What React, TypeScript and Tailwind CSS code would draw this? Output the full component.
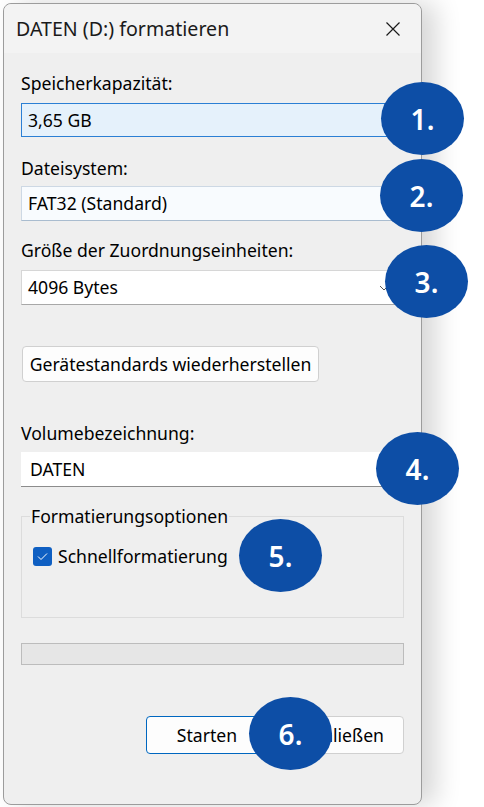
import React from "react";

const font = { fontFamily: "'Noto Sans', 'Open Sans', sans-serif" };

function Marker({ n, className }: { n: number; className: string }) {
  return (
    <div
      className={`absolute z-10 flex h-[73px] w-[83px] items-center justify-center rounded-[50%] bg-[#0d4ea6] text-[28px] font-semibold leading-none text-white ${className}`}
    >
      {n}.
    </div>
  );
}

function Label({ children, className = "" }: { children: React.ReactNode; className?: string }) {
  return <div className={`h-5 text-[17.6px] leading-5 text-black ${className}`}>{children}</div>;
}

export default function App() {
  return (
    <div className="h-[807px] w-[484px] overflow-hidden bg-white pl-[3px] pt-[3px]" style={font}>
      <div className="relative flex h-[802px] w-[419px] flex-col rounded-[8px] border border-[#9c9c9c] bg-[#efefef] shadow-[14px_0_26px_rgba(0,0,0,0.16)]">
        {/* title bar */}
        <div className="flex h-[49px] shrink-0 items-center justify-between rounded-t-[8px] bg-[#f3f3f3] pl-[12px] pr-[20px]">
          <span className="text-[19.6px] leading-6 text-[#1a1a1a]">DATEN (D:) formatieren</span>
          <svg width="16" height="16" viewBox="0 0 16 16" className="mt-[1px]">
            <path d="M1.5 1.5 L14.5 14.5 M14.5 1.5 L1.5 14.5" stroke="#1a1a1a" strokeWidth="1.2" fill="none" />
          </svg>
        </div>

        <div className="flex flex-col px-[17px]">
          <Label className="mt-[20px]">Speicherkapazität:</Label>
          <div className="mt-[10px] flex h-[34px] items-center border border-[#2b7fd4] bg-[#e5f1fb] pl-[6px] text-[17.6px] text-black">
            3,65 GB
          </div>

          <Label className="mt-[21px]">Dateisystem:</Label>
          <div className="mt-[8px] flex h-[35px] items-center border border-[#cdd8e4] border-b-[#a9bccf] bg-[#f8fbfe] pl-[6px] text-[17.6px] text-black">
            FAT32 (Standard)
          </div>

          <Label className="mt-[19px]">Größe der Zuordnungseinheiten:</Label>
          <div className="mt-[10px] flex h-[35px] items-center justify-between border border-[#d6d6d6] border-b-[#a8a8a8] bg-white pl-[6px] pr-[14px] text-[17.6px] text-black">
            <span>4096 Bytes</span>
            <svg width="10" height="6" viewBox="0 0 10 6">
              <path d="M1 1 L5 5 L9 1" stroke="#555" strokeWidth="1" fill="none" />
            </svg>
          </div>

          <button className="ml-[1px] mt-[41px] h-[36px] w-[297px] rounded-[4px] border border-[#d0d0d0] bg-[#fdfdfd] text-[17.6px] text-black">
            Gerätestandards wiederherstellen
          </button>

          <Label className="mt-[41px]">Volumebezeichnung:</Label>
          <div className="mt-[9px] flex h-[35px] items-center border-b border-[#8c8c8c] bg-white pl-[9px] text-[17.6px] text-black">
            DATEN
          </div>

          <fieldset className="mt-[19px] h-[112px] border border-[#dcdcdc] px-[8px] pb-0 pt-0">
            <legend className="px-[1px] text-[17.6px] leading-5 text-black">Formatierungsoptionen</legend>
            <div className="mt-[20px] flex items-center gap-[6px] pl-[3px]">
              <div className="flex h-[19px] w-[19px] items-center justify-center rounded-[3px] bg-[#0f5fc2]">
                <svg width="11" height="9" viewBox="0 0 11 9">
                  <path d="M1 4.5 L4 7.5 L10 1.5" stroke="#fff" strokeWidth="1" fill="none" />
                </svg>
              </div>
              <span className="text-[17.6px] leading-5 text-black">Schnellformatierung</span>
            </div>
          </fieldset>

          <div className="mt-[25px] h-[22px] border border-[#bcbcbc] bg-[#e6e6e6]" />

          <div className="mt-[51px] flex justify-end gap-[16px]">
            <button className="h-[38px] w-[122px] rounded-[4px] border border-[#0067c0] bg-[#fdfdfd] text-[17.6px] text-black">
              Starten
            </button>
            <button className="h-[38px] w-[120px] rounded-[4px] border border-[#d0d0d0] bg-[#fdfdfd] text-[17.6px] text-black">
              Schließen
            </button>
          </div>
        </div>

        <Marker n={1} className="left-[377px] top-[78px]" />
        <Marker n={2} className="left-[376px] top-[155px]" />
        <Marker n={3} className="left-[381px] top-[241px]" />
        <Marker n={4} className="left-[372px] top-[428px]" />
        <Marker n={5} className="left-[235px] top-[515px]" />
        <Marker n={6} className="left-[245px] top-[693px]" />
      </div>
    </div>
  );
}
